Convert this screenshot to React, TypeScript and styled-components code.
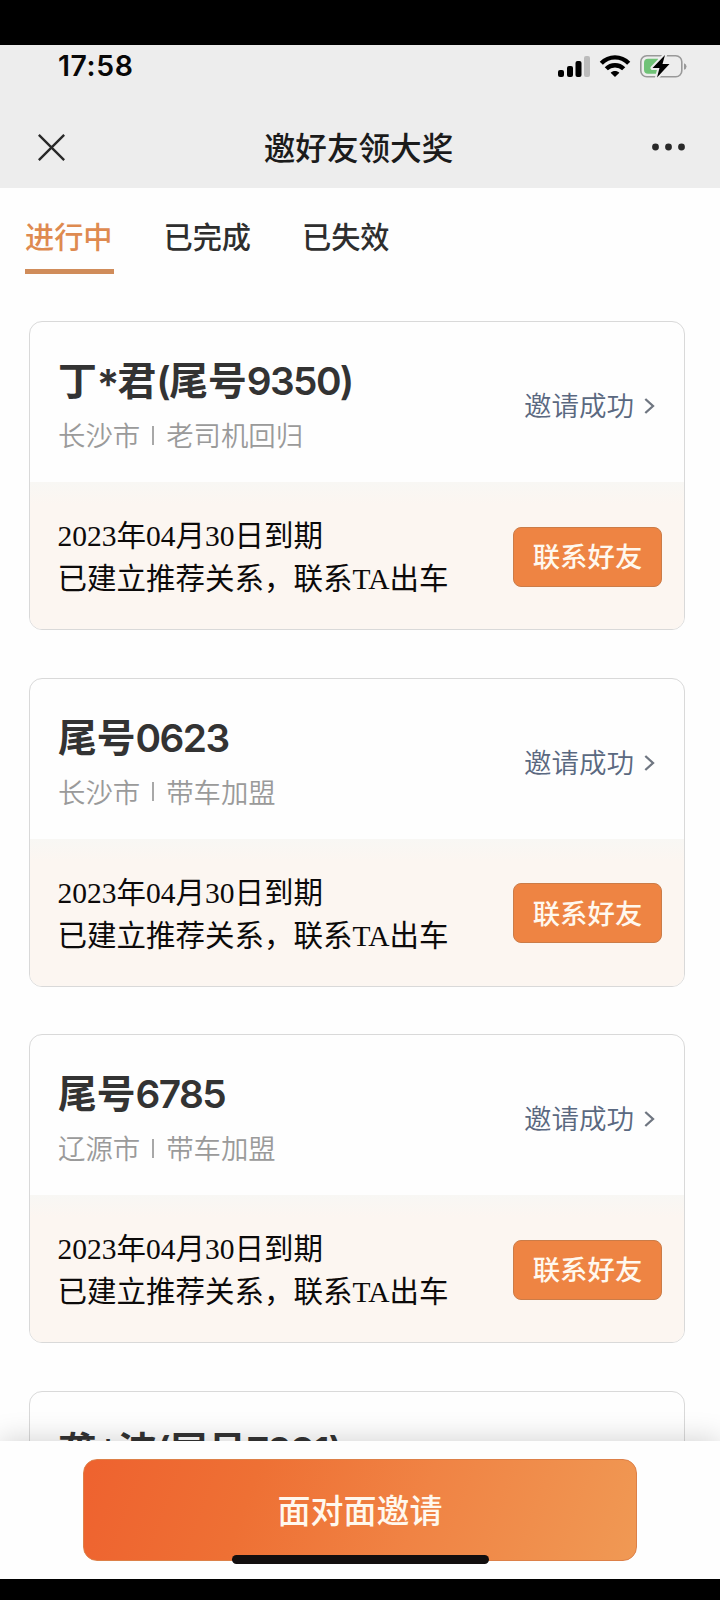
import React from "react";
import styled, { createGlobalStyle } from "styled-components";

const Global = createGlobalStyle`
  * { box-sizing: border-box; }
  body { margin: 0; background: #000; }
`;

const Screen = styled.div`
  width: 720px;
  height: 1600px;
  padding: 45px 0 21px;
  display: flex;
  flex-direction: column;
  background: #000;
  overflow: hidden;
  font-family: Inter, "Noto Sans CJK SC", sans-serif;
  white-space: nowrap;
`;

const Header = styled.header`
  flex: none;
  height: 143px;
  background: #ededed;
`;

const StatusBar = styled.div`
  height: 42px;
  padding: 0 32px 0 58px;
  display: flex;
  align-items: center;
  justify-content: space-between;
`;

const Clock = styled.span`
  font-size: 28.4px;
  font-weight: 600;
  line-height: 42px;
  letter-spacing: 0.6px;
  color: #080808;
`;

const NavBar = styled.div`
  height: 101px;
  padding: 19px 35px 0 38px;
  display: grid;
  grid-template-columns: 60px 1fr 60px;
  align-items: start;
`;

const NavTitle = styled.h1`
  margin: 2px 6px 0 0;
  text-align: center;
  font-size: 31.6px;
  line-height: 82px;
  font-weight: 500;
  color: #1b1b1b;
`;

const NavIcon = styled.div<{ $end?: boolean }>`
  height: 82px;
  display: flex;
  align-items: center;
  justify-content: ${(p) => (p.$end ? "flex-end" : "flex-start")};
`;

const Content = styled.main`
  flex: 1;
  min-height: 0;
  overflow: hidden;
  background: #fefefe;
`;

const Tabs = styled.nav`
  height: 133px;
  padding: 27px 25px 0;
  display: flex;
  gap: 49.5px;
`;

const Tab = styled.div<{ $active?: boolean }>`
  height: 59px;
  font-size: 29.2px;
  line-height: 45px;
  font-weight: 500;
  color: ${(p) => (p.$active ? "#de8a50" : "#2e2e2e")};
  border-bottom: 5px solid ${(p) => (p.$active ? "#d08c5a" : "transparent")};
  width: 89px;
`;

const CardList = styled.div`
  padding: 0 35px 0 29px;
  display: flex;
  flex-direction: column;
  gap: 47.6px;
`;

const Card = styled.article`
  flex: none;
  height: 309px;
  border: 1px solid #d9d9d9;
  border-radius: 13px;
  overflow: hidden;
  background: #fefefe;
`;

const CardTop = styled.div`
  height: 160px;
  padding: 36px 29px 0 28px;
  display: flex;
  justify-content: space-between;
`;

const Name = styled.h2`
  margin: 0;
  font-size: 38.8px;
  line-height: 46px;
  font-weight: 600;
  color: #333;
`;

const Latin = styled.span`
  letter-spacing: -1.6px;
`;

const Star = styled.span`
  font-size: 42px;
  line-height: 0;
  letter-spacing: -2px;
  vertical-align: -5px;
`;

const Meta = styled.div`
  margin-top: 12px;
  display: flex;
  align-items: center;
  font-size: 27.4px;
  line-height: 40px;
  font-weight: 350;
  color: #9a9a9a;
`;

const Divider = styled.i`
  width: 2px;
  height: 19px;
  margin: 0 12px 2px 12px;
  background: #a8a8a8;
`;

const Status = styled.div`
  height: 40px;
  margin-top: 28px;
  display: flex;
  align-items: center;
  gap: 10px;
  font-size: 27.5px;
  line-height: 40px;
  font-weight: 350;
  color: #5a6880;
`;

const CardBottom = styled.div`
  height: 147px;
  padding: 2px 22px 0 27.5px;
  display: flex;
  align-items: center;
  justify-content: space-between;
  background: linear-gradient(#f8f7f4 0, #fcf6f1 22px);
`;

const Notice = styled.p`
  margin: 3px 0 0;
  font-family: "Liberation Serif", "Noto Sans CJK SC", serif;
  font-size: 29.5px;
  line-height: 42.7px;
  color: #0c0a0a;
`;

const ContactButton = styled.button`
  width: 149px;
  height: 60px;
  padding: 0 0 3px;
  border: 1px solid #cb7c48;
  border-radius: 8px;
  background: #ee8443;
  color: #fff8ee;
  font: 500 27.4px/40px "Noto Sans CJK SC", sans-serif;
`;

const Footer = styled.footer`
  flex: none;
  position: relative;
  height: 138px;
  padding-top: 18px;
  display: flex;
  justify-content: center;
  align-items: flex-start;
  background: #fefefe;
  box-shadow: 0 -2px 26px rgba(0, 0, 0, 0.17);
`;

const InviteButton = styled.button`
  width: 554px;
  height: 102px;
  padding: 0 0 3px;
  border: 1px solid #dd8048;
  border-radius: 14px;
  background: linear-gradient(110deg, #ee622f 0%, #ee7034 30%, #f08344 60%, #f09954 100%);
  color: #fff8ee;
  font: 500 33px/48px "Noto Sans CJK SC", sans-serif;
`;

const HomeIndicator = styled.div`
  position: absolute;
  left: 232px;
  bottom: 15px;
  width: 257px;
  height: 9px;
  border-radius: 5px;
  background: #120e0e;
`;

const StatusIcons = () => (
  <svg width="130" height="26" viewBox="0 0 130 26">
    <rect x="0" y="17" width="6" height="7" rx="2" fill="#000" />
    <rect x="9" y="13" width="6" height="11" rx="2" fill="#000" />
    <rect x="17.5" y="8" width="6" height="16" rx="2" fill="#000" />
    <rect x="26" y="3" width="6" height="21" rx="2" fill="#bcbcbc" />
    <g fill="none" stroke="#000" strokeWidth="4.4">
      <path d="M43.3 10.2C51 2.4 63 2.4 70.7 10.2" />
      <path d="M48.3 15.8C53 11 61 11 65.7 15.8" />
    </g>
    <path d="M52.6 19.7C55 17.5 59 17.5 61.4 19.7L57 24Z" fill="#000" />
    <rect x="82.8" y="2.8" width="41" height="21" rx="6" fill="none" stroke="#999" strokeWidth="1.6" />
    <path d="M126 10.2Q128.5 11 128.5 13.5T126 16.8Z" fill="#999" />
    <path d="M90 5.8H100V20.8H90Q86 20.8 86 16.8V9.8Q86 5.8 90 5.8Z" fill="#70c277" />
    <path d="M107 2L94.5 15H101.5L99 24.5L111.5 11H104.5Z" fill="#000" stroke="#ededed" strokeWidth="4" strokeLinejoin="round" />
    <path d="M107 2L94.5 15H101.5L99 24.5L111.5 11H104.5Z" fill="#000" />
  </svg>
);

const CloseIcon = () => (
  <svg width="27" height="27" viewBox="0 0 26 26" stroke="#292929" strokeWidth="2.3">
    <path d="M.8 .8L25.2 25.2M25.2 .8L.8 25.2" />
  </svg>
);

const MoreIcon = () => (
  <svg width="33" height="8" viewBox="0 0 33 8" fill="#292929">
    <circle cx="3.5" cy="4" r="3.4" />
    <circle cx="16.5" cy="4" r="3.4" />
    <circle cx="29.5" cy="4" r="3.4" />
  </svg>
);

const Chevron = () => (
  <svg width="11" height="16" viewBox="0 0 11 16" fill="none" stroke="#6f7681" strokeWidth="2.3">
    <path d="M1.3 1L9 8L1.3 15" />
  </svg>
);

const mixed = (text: string) =>
  text.split(/([\x20-\x7e]+)/).map((part, i) => {
    if (part === "*") return <Star key={i}>{part}</Star>;
    return i % 2 ? <Latin key={i}>{part}</Latin> : part;
  });

const invites = [
  { name: "丁*君(尾号9350)", city: "长沙市", kind: "老司机回归" },
  { name: "尾号0623", city: "长沙市", kind: "带车加盟" },
  { name: "尾号6785", city: "辽源市", kind: "带车加盟" },
  { name: "龚*波(尾号7281)", city: "长沙市", kind: "带车加盟" },
];

export default function App() {
  return (
    <Screen>
      <Global />
      <Header>
        <StatusBar>
          <Clock>17:58</Clock>
          <StatusIcons />
        </StatusBar>
        <NavBar>
          <NavIcon><CloseIcon /></NavIcon>
          <NavTitle>邀好友领大奖</NavTitle>
          <NavIcon $end><MoreIcon /></NavIcon>
        </NavBar>
      </Header>
      <Content>
        <Tabs>
          <Tab $active>进行中</Tab>
          <Tab>已完成</Tab>
          <Tab>已失效</Tab>
        </Tabs>
        <CardList>
          {invites.map((item) => (
            <Card key={item.name}>
              <CardTop>
                <div>
                  <Name>{mixed(item.name)}</Name>
                  <Meta>{item.city}<Divider />{item.kind}</Meta>
                </div>
                <Status>邀请成功<Chevron /></Status>
              </CardTop>
              <CardBottom>
                <Notice>2023年04月30日到期<br />已建立推荐关系，联系TA出车</Notice>
                <ContactButton>联系好友</ContactButton>
              </CardBottom>
            </Card>
          ))}
        </CardList>
      </Content>
      <Footer>
        <InviteButton>面对面邀请</InviteButton>
        <HomeIndicator />
      </Footer>
    </Screen>
  );
}
